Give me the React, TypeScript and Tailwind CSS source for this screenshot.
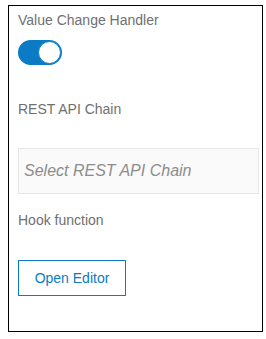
import React from 'react';

const App = () => {
  return (
    <div className="w-[266px] h-[339px] bg-white pt-[5px] pl-[8px]" style={{ fontFamily: '"Liberation Sans", Arial, sans-serif' }}>
      <div className="w-[255px] h-[327px] border border-black pl-[9px] pt-[6px] flex flex-col items-start">
        <label className="text-[14px] leading-[16px] text-[#707070]">Value Change Handler</label>

        <div className="mt-[12px] w-[44px] h-[25px] rounded-full bg-[#0a7bc4] relative">
          <span className="absolute right-[1px] top-[1px] w-[23px] h-[23px] rounded-full bg-white border-[1.5px] border-[#0a7bc4]" />
        </div>

        <label className="mt-[36px] text-[14px] leading-[16px] text-[#707070]">REST API Chain</label>

        <div className="mt-[31px] w-[241px] h-[46px] bg-[#fafafa] border border-[#e6e6e6] flex items-center px-[5px]">
          <span className="text-[16px] italic text-[#8c8c8c]">Select REST API Chain</span>
        </div>

        <label className="mt-[18px] text-[14px] leading-[16px] text-[#707070]">Hook function</label>

        <button className="mt-[32px] w-[108px] h-[36px] border border-[#0a7bc4] text-[14px] text-[#0a7bc4] bg-white flex items-center justify-center">
          Open Editor
        </button>
      </div>
    </div>
  );
};

export default App;
